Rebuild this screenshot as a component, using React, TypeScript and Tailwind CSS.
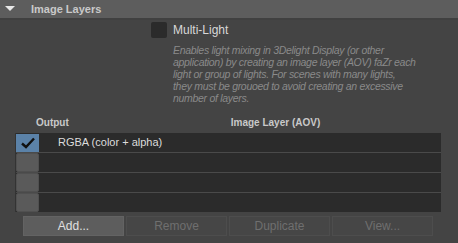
export default function App() {
  const desc = [
    'Enables light mixing in 3Delight Display (or other',
    'application) by creating an image layer (AOV) faZr each',
    'light or group of lights. For scenes with many lights,',
    'they must be grouoed to avoid creating an excessive',
    'number of layers.',
  ];
  const rows = [
    { checked: true, label: 'RGBA (color + alpha)' },
    { checked: false, label: '' },
    { checked: false, label: '' },
    { checked: false, label: '' },
  ];
  const buttons = [
    { label: 'Add...', enabled: true },
    { label: 'Remove', enabled: false },
    { label: 'Duplicate', enabled: false },
    { label: 'View...', enabled: false },
  ];

  return (
    <div className="w-[458px] h-[243px] overflow-hidden bg-[#444444] text-[#d4d4d4]" style={{ fontFamily: '"Liberation Sans", Arial, sans-serif' }}>
      {/* section header */}
      <div className="h-[18px] bg-[#5d5d5d] flex items-center border-b-2 border-[#404040] box-content">
        <svg width="10" height="6" viewBox="0 0 10 6" className="ml-[5px]">
          <polygon points="0,0 10,0 5,5" fill="#e8e8e8" />
        </svg>
        <span className="ml-[16px] text-[11px] font-bold text-[#c9c9c9]">Image Layers</span>
      </div>

      {/* multi-light */}
      <div className="flex items-center pl-[151px] mt-[2px] h-[16px]">
        <div className="w-[16px] h-[16px] rounded-[2px] bg-[#2b2b2b]" />
        <span className="ml-[6px] text-[12px] text-[#d8d8d8]">Multi-Light</span>
      </div>
      <div className="pl-[173px] mt-[6px] text-[10.5px] tracking-[-0.3px] italic leading-[12px] text-[#8a8a8a]">
        {desc.map(l => (
          <div key={l} className="whitespace-nowrap">{l}</div>
        ))}
      </div>

      {/* table */}
      <div className="mt-[12px] flex h-[12px] items-center text-[10px] font-bold text-[#c9c9c9]">
        <span className="ml-[36px]">Output</span>
        <span className="ml-[162px]">Image Layer (AOV)</span>
      </div>
      <div className="ml-[15px] mt-[5px] w-[426px] flex flex-col gap-px bg-[#4a4a4a] border-l border-[#333]">
        {rows.map((r, i) => (
          <div key={i} className="h-[19px] bg-[#2b2b2b] flex items-center">
            {r.checked ? (
              <div className="w-[23px] h-[18px] bg-[#5b82a8] flex items-center justify-center">
                <svg width="16" height="12" viewBox="0 0 16 12">
                  <path d="M2 6.5 L6 10 L14 1.5" stroke="#111" strokeWidth="2.4" fill="none" />
                </svg>
              </div>
            ) : (
              <div className="w-[23px] h-[19px] rounded-[2px] bg-[#5a5a5a] border border-[#505050]" />
            )}
            <span className="ml-[19px] text-[11px] text-[#dcdcdc]">{r.label}</span>
          </div>
        ))}
      </div>

      {/* buttons */}
      <div className="ml-[23px] mt-[4px] flex gap-[2px]">
        {buttons.map(b => (
          <div
            key={b.label}
            className={`w-[101px] h-[20px] flex items-center justify-center text-[12px] border ${
              b.enabled ? 'bg-[#5d5d5d] border-[#636363] text-[#e0e0e0]' : 'bg-[#464646] border-[#4d4d4d] text-[#6f6f6f]'
            }`}
          >
            {b.label}
          </div>
        ))}
      </div>
    </div>
  );
}
